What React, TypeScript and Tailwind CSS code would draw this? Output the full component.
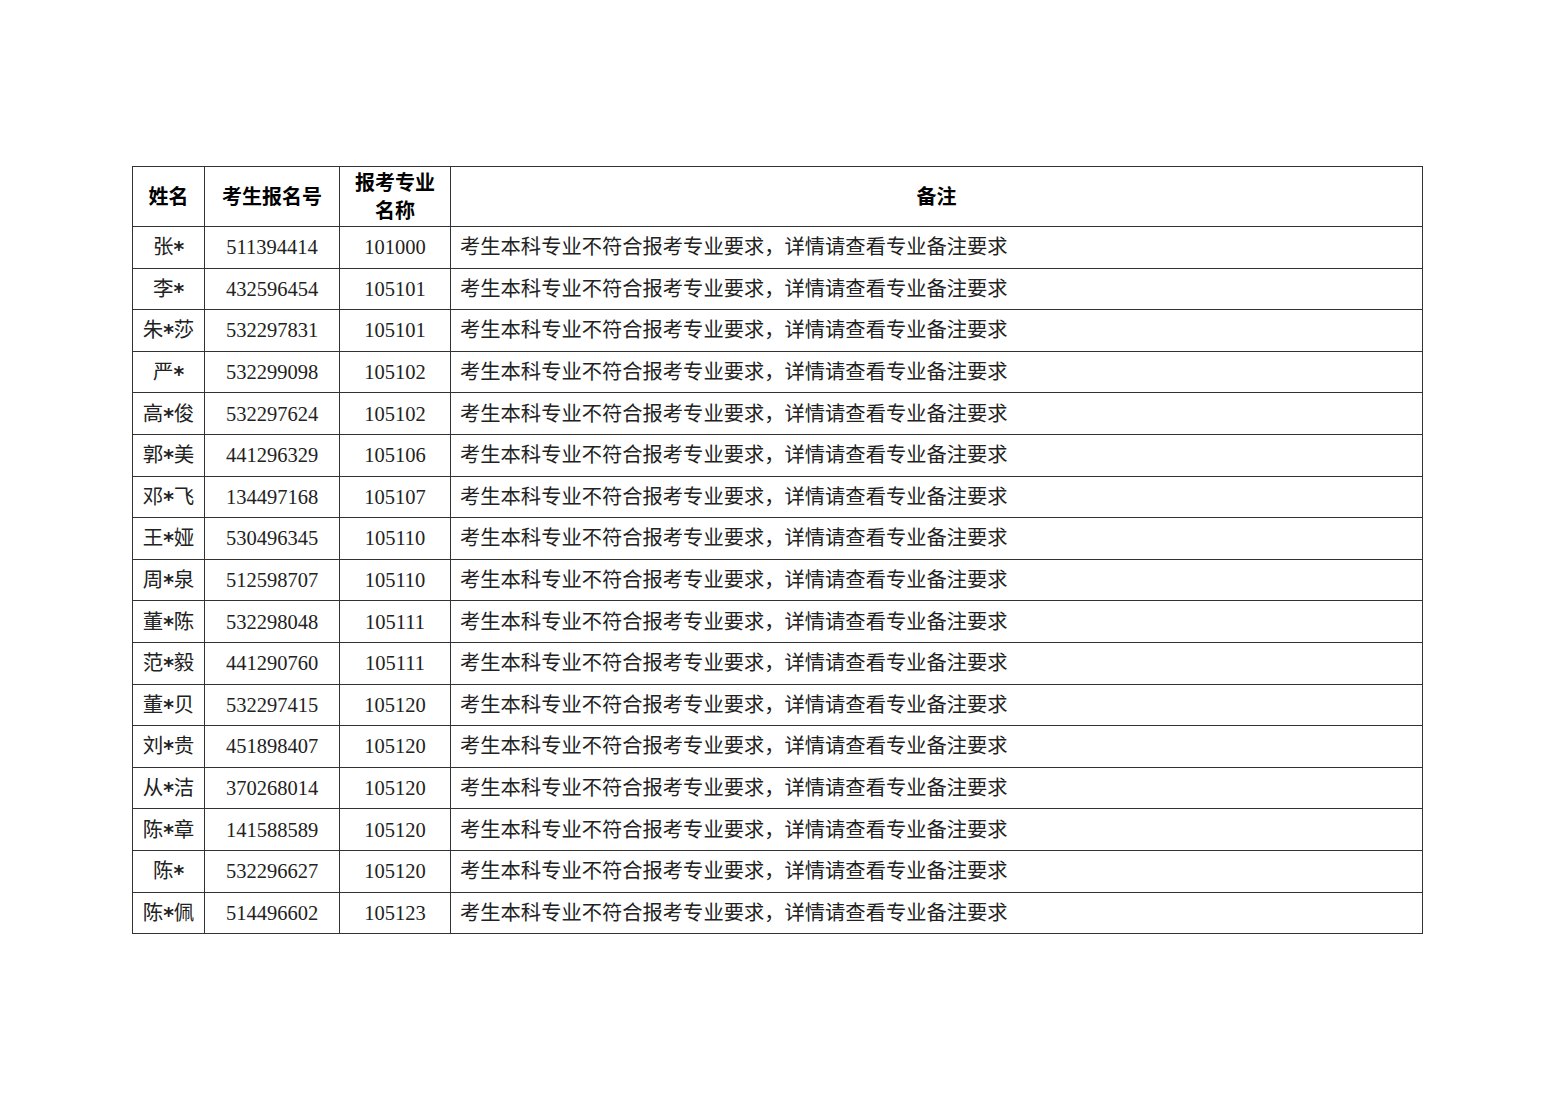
import React from "react";

const rows: [string, string, string][] = [
  ["张*", "511394414", "101000"],
  ["李*", "432596454", "105101"],
  ["朱*莎", "532297831", "105101"],
  ["严*", "532299098", "105102"],
  ["高*俊", "532297624", "105102"],
  ["郭*美", "441296329", "105106"],
  ["邓*飞", "134497168", "105107"],
  ["王*娅", "530496345", "105110"],
  ["周*泉", "512598707", "105110"],
  ["董*陈", "532298048", "105111"],
  ["范*毅", "441290760", "105111"],
  ["董*贝", "532297415", "105120"],
  ["刘*贵", "451898407", "105120"],
  ["从*洁", "370268014", "105120"],
  ["陈*章", "141588589", "105120"],
  ["陈*", "532296627", "105120"],
  ["陈*佩", "514496602", "105123"],
];

const note = "考生本科专业不符合报考专业要求，详情请查看专业备注要求";

function Name({ s }: { s: string }) {
  const [a, b] = s.split("*");
  return (
    <>
      {a}
      <span className="relative top-[3px] font-bold" style={{ fontFamily: '"DejaVu Sans", sans-serif' }}>
        *
      </span>
      {b}
    </>
  );
}

export default function App() {
  return (
    <div
      className="w-[1559px] h-[1102px] bg-white pt-[166px] pl-[132px]"
      style={{ fontFamily: '"Liberation Serif", "Noto Sans CJK SC", serif' }}
    >
      <table className="table-fixed border-collapse w-[1290px] text-[20.5px] text-[#222]">
        <colgroup>
          <col className="w-[72px]" />
          <col className="w-[135px]" />
          <col className="w-[111px]" />
          <col className="w-[972px]" />
        </colgroup>
        <thead>
          <tr className="h-[60px]">
            <th className="border border-[#333] font-bold text-black text-[20px] leading-[28px]">姓名</th>
            <th className="border border-[#333] font-bold text-black text-[20px] leading-[28px]">考生报名号</th>
            <th className="border border-[#333] font-bold text-black text-[20px] leading-[28px]">
              报考专业
              <br />
              名称
            </th>
            <th className="border border-[#333] font-bold text-black text-[20px] leading-[28px]">备注</th>
          </tr>
        </thead>
        <tbody>
          {rows.map((r, i) => (
            <tr key={i} className="h-[41.6px]">
              <td className="border border-[#333] text-center p-0 leading-[24px] whitespace-nowrap">
                <Name s={r[0]} />
              </td>
              <td className="border border-[#333] text-center p-0 leading-[24px]">{r[1]}</td>
              <td className="border border-[#333] text-center p-0 leading-[24px]">{r[2]}</td>
              <td className="border border-[#333] text-left pl-[9px] p-0 leading-[24px] text-[20.3px]">{note}</td>
            </tr>
          ))}
        </tbody>
      </table>
    </div>
  );
}
